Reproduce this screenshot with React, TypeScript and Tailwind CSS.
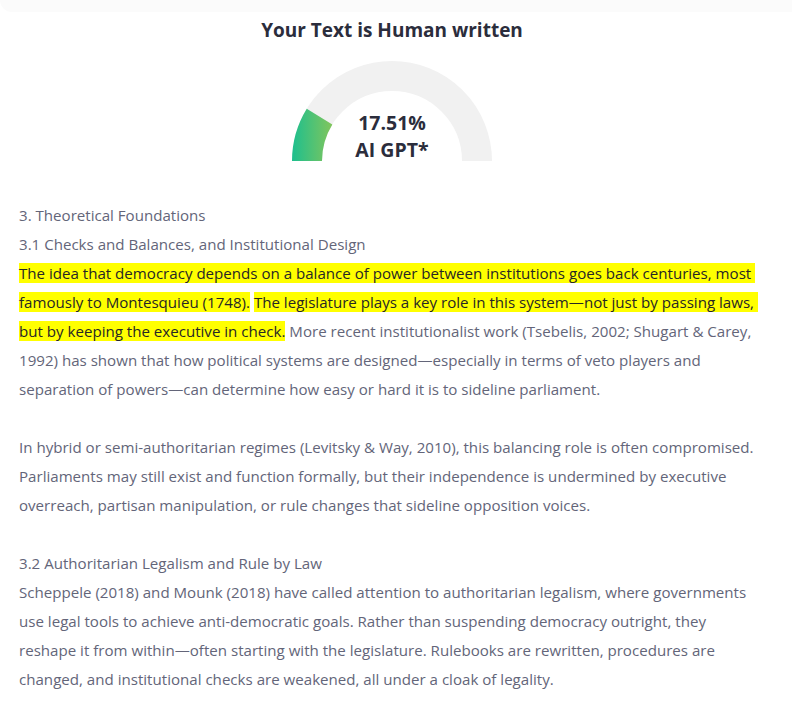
const font = { fontFamily: '"Open Sans", "Noto Sans", sans-serif' };

function Hl({ children }: { children: React.ReactNode }) {
  return <span className="bg-[#ffff00] text-[#262626]">{children}</span>;
}

function Gauge({ percent }: { percent: number }) {
  const angle = Math.PI - (percent / 100) * Math.PI;
  const ex = 100 + 85 * Math.cos(angle);
  const ey = 100 - 85 * Math.sin(angle);
  return (
    <div className="relative w-[200px] h-[100px] mt-[17px]">
      <svg width="200" height="100" viewBox="0 0 200 100">
        <defs>
          <linearGradient id="g" x1="0" y1="0" x2="45" y2="0" gradientUnits="userSpaceOnUse">
            <stop offset="0" stopColor="#1dbf8e" />
            <stop offset="1" stopColor="#8dc656" />
          </linearGradient>
        </defs>
        <path d="M15 100 A85 85 0 0 1 185 100" fill="none" stroke="#f1f1f1" strokeWidth="30" />
        <path d={`M15 100 A85 85 0 0 1 ${ex} ${ey}`} fill="none" stroke="url(#g)" strokeWidth="30" />
      </svg>
      <div className="absolute inset-x-0 top-[48px] flex flex-col items-center text-[19.5px] leading-[27px] font-bold text-[#2b2d3c]">
        <span>{percent.toFixed(2)}%</span>
        <span>AI GPT*</span>
      </div>
    </div>
  );
}

const Line = ({ children }: { children?: React.ReactNode }) => (
  <div className="h-[29px] whitespace-pre">{children}</div>
);

export default function App() {
  return (
    <div className="min-h-screen bg-white" style={font}>
      <div className="h-3 bg-[#fbfbfb] rounded-bl-xl" />
      <div className="flex flex-col items-center pr-2">
        <h1 className="mt-1 text-[19px] leading-[28px] font-bold text-[#2b2d3c]">Your Text is Human written</h1>
        <Gauge percent={17.51} />
      </div>
      <div className="mt-[40px] px-[19px] text-[15.1px] leading-[29px] text-[#636579]">
        <Line>3. Theoretical Foundations</Line>
        <Line>3.1 Checks and Balances, and Institutional Design</Line>
        <Line>
          <Hl>The idea that democracy depends on a balance of power between institutions goes back centuries, most </Hl>
        </Line>
        <Line>
          <Hl>famously to Montesquieu (1748).</Hl> <Hl>The legislature plays a key role in this system—not just by passing laws, </Hl>
        </Line>
        <Line>
          <Hl>but by keeping the executive in check.</Hl> More recent institutionalist work (Tsebelis, 2002; Shugart &amp; Carey,
        </Line>
        <Line>1992) has shown that how political systems are designed—especially in terms of veto players and</Line>
        <Line>separation of powers—can determine how easy or hard it is to sideline parliament.</Line>
        <Line />
        <Line>In hybrid or semi-authoritarian regimes (Levitsky &amp; Way, 2010), this balancing role is often compromised.</Line>
        <Line>Parliaments may still exist and function formally, but their independence is undermined by executive</Line>
        <Line>overreach, partisan manipulation, or rule changes that sideline opposition voices.</Line>
        <Line />
        <Line>3.2 Authoritarian Legalism and Rule by Law</Line>
        <Line>Scheppele (2018) and Mounk (2018) have called attention to authoritarian legalism, where governments</Line>
        <Line>use legal tools to achieve anti-democratic goals. Rather than suspending democracy outright, they</Line>
        <Line>reshape it from within—often starting with the legislature. Rulebooks are rewritten, procedures are</Line>
        <Line>changed, and institutional checks are weakened, all under a cloak of legality.</Line>
      </div>
    </div>
  );
}
